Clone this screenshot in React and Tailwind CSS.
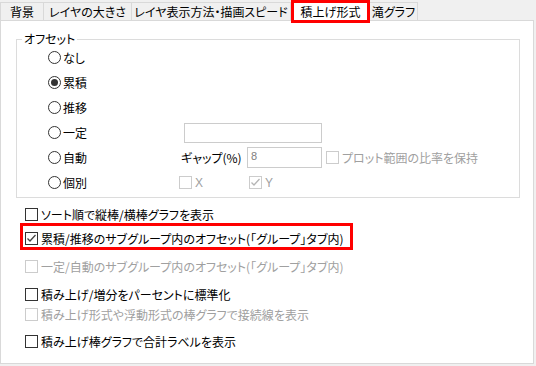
import React from 'react';

const FONT = "font-['Noto_Sans_CJK_JP','Noto_Sans',sans-serif] [font-feature-settings:'palt']";

const Check = ({ color }) => (
    <svg width="11" height="11" viewBox="0 0 11 11">
        <polyline points="1.5,5.5 4,8 9.5,2" fill="none" stroke={color} strokeWidth="1.3" />
    </svg>
);

const Box = ({ checked, disabled }) => (
    <span
        className={`w-[13px] h-[13px] shrink-0 flex items-center justify-center bg-white border ${
            disabled ? 'border-[#cccccc]' : 'border-[#333333]'
        }`}
    >
        {checked && <Check color={disabled ? '#b5b5b5' : '#444444'} />}
    </span>
);

const Radio = ({ checked, label }) => (
    <div className="flex items-center w-[131px] shrink-0">
        <span className="w-[13px] h-[13px] rounded-full border border-[#333333] bg-white flex items-center justify-center">
            {checked && <span className="w-[7px] h-[7px] rounded-full bg-[#333333]" />}
        </span>
        <span className="ml-[2px]">{label}</span>
    </div>
);

const Option = ({ label, checked, disabled, className = '' }) => (
    <div className={`flex items-center h-[13px] ${className}`}>
        <Box checked={checked} disabled={disabled} />
        <span className={`ml-[3px] whitespace-nowrap ${disabled ? 'text-[#a0a0a0]' : 'text-black'}`}>{label}</span>
    </div>
);

const Tab = ({ label, width }) => (
    <div
        className="h-[18px] flex items-center justify-center border-t border-l border-[#d9d9d9] bg-[#f0f0f0] whitespace-nowrap"
        style={{ width }}
    >
        {label}
    </div>
);

export default function App() {
    return (
        <div className={`w-[536px] h-[366px] bg-[#f0f0f0] text-[12px] leading-[16px] text-black ${FONT}`}>
            {/* tabs */}
            <div className="flex items-end h-[20px]">
                <Tab label="背景" width={43} />
                <Tab label="レイヤの大きさ" width={88} />
                <div className="h-[18px] w-[160px] flex items-center justify-center border-t border-l border-r border-[#d9d9d9] whitespace-nowrap">
                    レイヤ表示方法・描画スピード
                </div>
                <div className="relative z-10 -mb-[3px] h-[23px] w-[79px] flex items-center justify-center border-[3px] border-[#ff0000] bg-white whitespace-nowrap">
                    積上げ形式
                </div>
                <div className="h-[18px] w-[48px] flex items-center justify-center border-t border-r border-[#d9d9d9] whitespace-nowrap">
                    滝グラフ
                </div>
            </div>

            {/* panel */}
            <div className="w-[534px] h-[344px] bg-white border border-[#d9d9d9]">
                <div className="relative ml-[15px] mt-[18px] w-[504px] border border-[#dcdcdc] pt-[5px] pb-[2px] pl-[31px]">
                    <span className="absolute left-[5px] -top-[9px] px-[2px] bg-white">オフセット</span>

                    <div className="h-[25px] flex items-center">
                        <Radio label="なし" />
                    </div>
                    <div className="h-[25px] flex items-center">
                        <Radio label="累積" checked />
                    </div>
                    <div className="h-[25px] flex items-center">
                        <Radio label="推移" />
                    </div>
                    <div className="h-[25px] flex items-center">
                        <Radio label="一定" />
                        <div className="ml-[5px] w-[138px] h-[20px] border border-[#cccccc] bg-white" />
                    </div>
                    <div className="h-[25px] flex items-center">
                        <Radio label="自動" />
                        <span className="w-[68px] pl-[2px] whitespace-nowrap">ギャップ(%)</span>
                        <div className="w-[75px] h-[21px] border border-[#cccccc] bg-white pl-[3px] pt-[1px] font-['Liberation_Sans',sans-serif] text-[11px] leading-[14px] text-[#808080]">
                            8
                        </div>
                        <Option className="ml-[4px]" label="プロット範囲の比率を保持" disabled />
                    </div>
                    <div className="h-[25px] flex items-center">
                        <Radio label="個別" />
                        <div className="w-[70px] flex items-center">
                            <Box disabled />
                            <span className="ml-[3px] text-[#a0a0a0] font-['Liberation_Sans',sans-serif]">X</span>
                        </div>
                        <div className="flex items-center">
                            <Box disabled checked />
                            <span className="ml-[3px] text-[#a0a0a0] font-['Liberation_Sans',sans-serif]">Y</span>
                        </div>
                    </div>
                </div>

                <div className="pl-[19px]">
                    <Option className="mt-[10px] pl-[5px]" label="ソート順で縦棒/横棒グラフを表示" />
                    <div className="mt-[2px] w-[333px] border-[3px] border-[#ff0000] pt-[6px] pb-[2px] pl-[2px]">
                        <Option label="累積/推移のサブグループ内のオフセット(「グループ」タブ内)" checked />
                    </div>
                    <Option className="mt-[10px] pl-[5px]" label="一定/自動のサブグループ内のオフセット(「グループ」タブ内)" disabled />
                    <Option className="mt-[15px] pl-[5px]" label="積み上げ/増分をパーセントに標準化" />
                    <Option className="mt-[7px] pl-[5px]" label="積み上げ形式や浮動形式の棒グラフで接続線を表示" disabled />
                    <Option className="mt-[14px] pl-[5px]" label="積み上げ棒グラフで合計ラベルを表示" />
                </div>
            </div>
        </div>
    );
}
